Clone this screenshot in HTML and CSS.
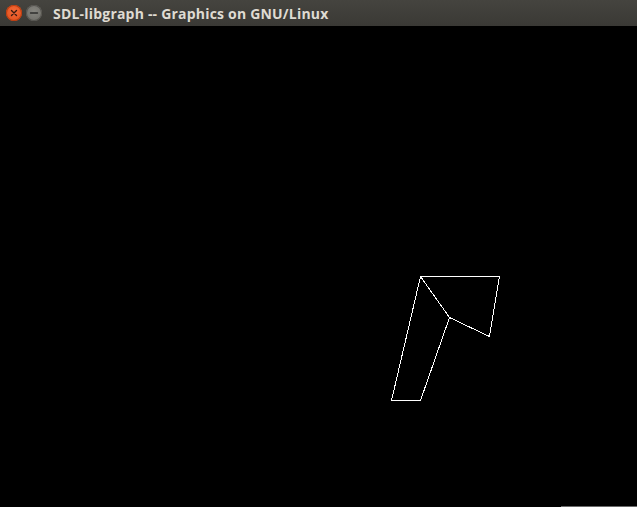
FILE: index.html
```html
<!DOCTYPE html>
<html>
<head>
<meta charset="utf-8">
<link rel="stylesheet" href="styles.css">
</head>
<body>
<div class="window">
  <div class="titlebar">
    <span class="btn close">
      <svg width="16" height="16" viewBox="0 0 16 16"><path d="M5.5 5.5 L10.5 10.5 M10.5 5.5 L5.5 10.5" stroke="#3a1a10" stroke-width="1.4" stroke-linecap="round"/></svg>
    </span>
    <span class="btn min">
      <svg width="16" height="16" viewBox="0 0 16 16"><path d="M4.5 8 H11.5" stroke="#2e2e2c" stroke-width="1.4" stroke-linecap="round"/></svg>
    </span>
    <span class="title">SDL-libgraph -- Graphics on GNU/Linux</span>
  </div>
  <div class="canvas">
    <svg class="drawing" width="637" height="481" viewBox="0 26 637 481">
      <g fill="none" stroke="#ffffff" stroke-width="1" shape-rendering="crispEdges">
        <polyline points="420.5,276.5 499.5,276.5 489.5,336.5 449.5,317.5 420.5,276.5"/>
        <polyline points="449.5,317.5 420.5,400.5 391.5,400.5 420.5,276.5"/>
      </g>
    </svg>
    <div class="bottomline"></div>
  </div>
</div>
</body>
</html>
```
FILE: styles.css
```css
html, body {
  margin: 0;
  padding: 0;
  background: #000;
}
.window {
  width: 637px;
  height: 507px;
  display: flex;
  flex-direction: column;
  overflow: hidden;
}
.titlebar {
  height: 26px;
  flex: 0 0 26px;
  background: linear-gradient(#45443f, #3a3935);
  display: flex;
  align-items: center;
  padding-left: 6px;
  gap: 4px;
  box-sizing: border-box;
}
.btn {
  width: 16px;
  height: 16px;
  border-radius: 50%;
  display: flex;
  align-items: center;
  justify-content: center;
}
.close {
  background: radial-gradient(circle at 50% 40%, #f26b3a, #df4a16);
  box-shadow: inset 0 0 0 1px #b93d10;
}
.min {
  background: radial-gradient(circle at 50% 40%, #86857f, #6a6964);
  box-shadow: inset 0 0 0 1px #55544f;
}
.title {
  margin-left: 7px;
  font-family: "Open Sans", "DejaVu Sans", sans-serif;
  font-weight: 700;
  font-size: 14px;
  color: #dfdbd2;
  letter-spacing: 0.2px;
}
.canvas {
  flex: 1;
  background: #000;
  position: relative;
}
.drawing {
  display: block;
}
.bottomline {
  position: absolute;
  left: 561px;
  right: 0;
  bottom: 0;
  height: 1px;
  background: #6a6a6a;
}
```
